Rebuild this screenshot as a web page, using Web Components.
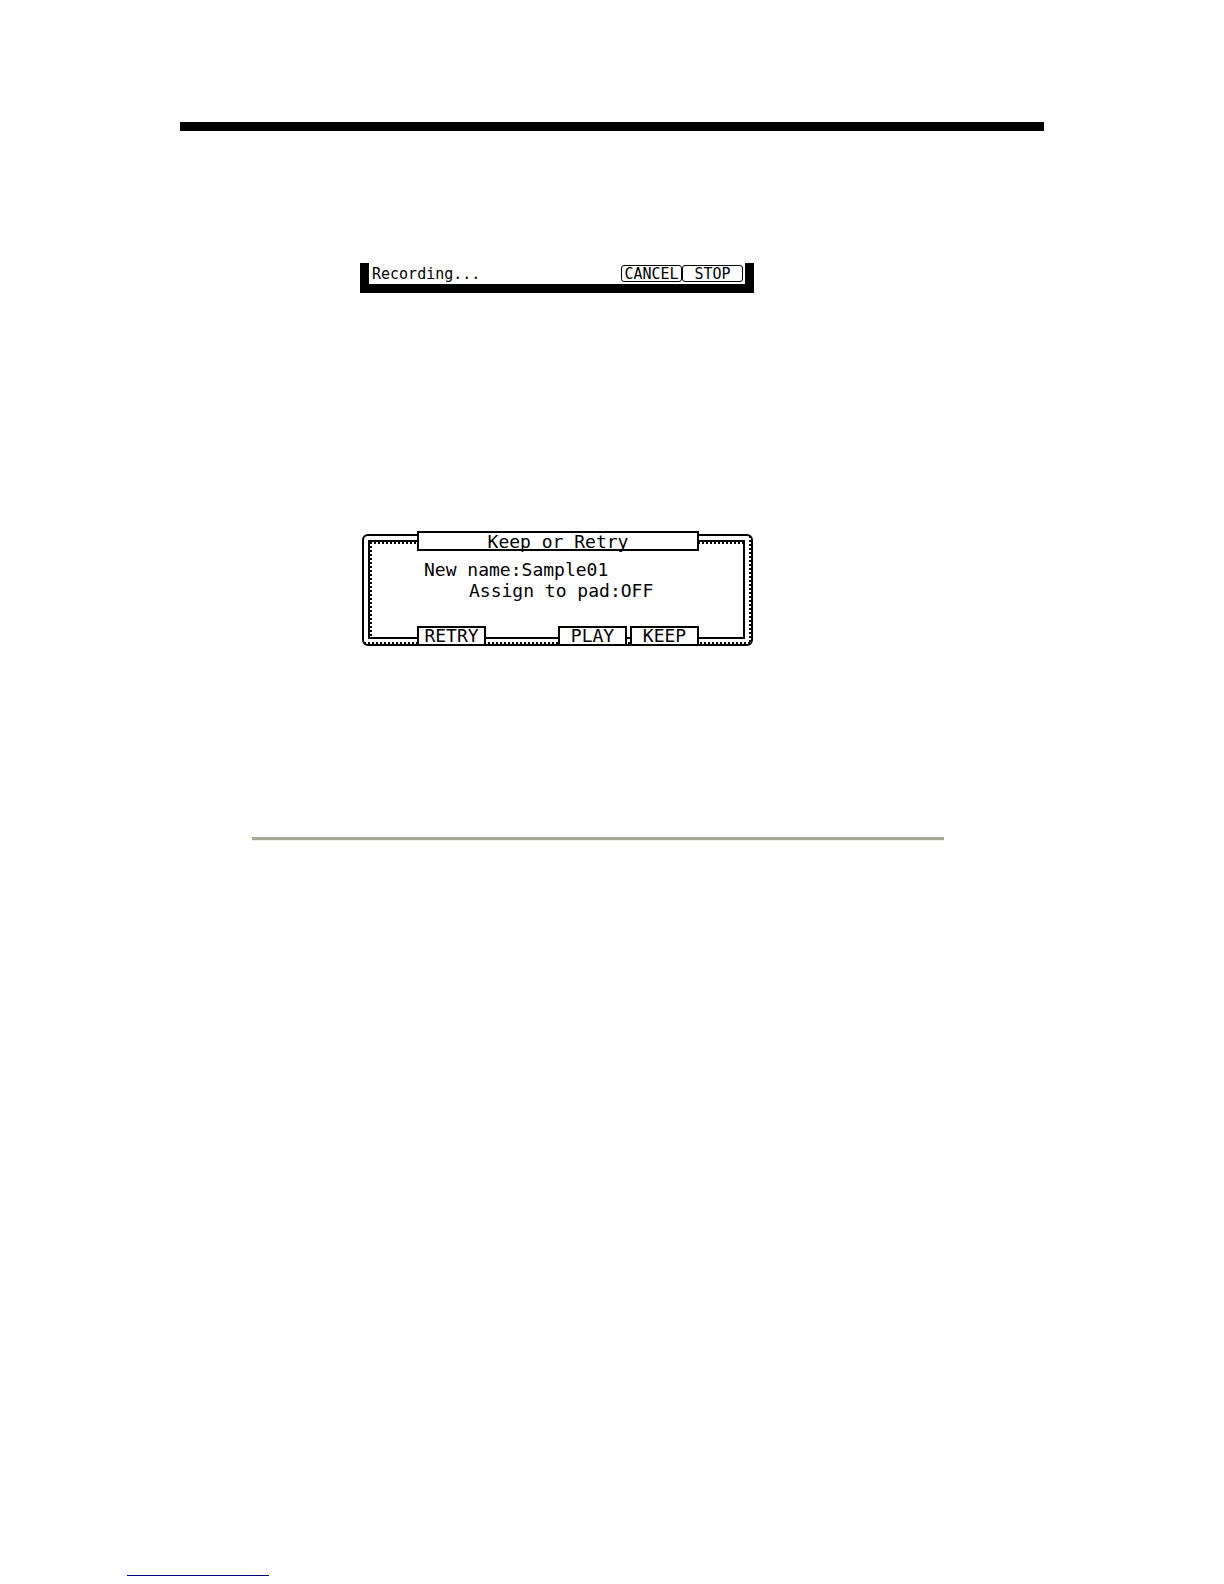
<!DOCTYPE html>
<html lang="en">
<head>
<meta charset="utf-8">
<title>Recording a sample</title>
<style>
    body {
        margin: 0;
        background: #fff;
        color: #000;
        font-family: "DejaVu Sans Mono", monospace;
    }
</style>
</head>
<body>
<manual-page>
    <status-strip>
        Recording...
        <soft-key slot="keys" variant="rounded">CANCEL</soft-key>
        <soft-key slot="keys" variant="rounded">STOP</soft-key>
    </status-strip>
    <lcd-dialog titulo="Keep or Retry">
        <lcd-field label="New name:" value="Sample01"></lcd-field>
        <lcd-field label="Assign to pad:" value="OFF" indent></lcd-field>
        <soft-key slot="keys">RETRY</soft-key>
        <soft-key slot="keys" class="push">PLAY</soft-key>
        <soft-key slot="keys">KEEP</soft-key>
    </lcd-dialog>
</manual-page>

<script>
class ManualPage extends HTMLElement {
    constructor() {
        super();
        this.attachShadow({ mode: "open" });
    }

    connectedCallback() {
        this.shadowRoot.innerHTML = `
            <style>
                :host {
                    display: flex;
                    flex-direction: column;
                    box-sizing: border-box;
                    min-height: 100vh;
                    padding: 122px 180px 8px;
                }

                hr {
                    margin: 0;
                    border: 0;
                }

                .top {
                    height: 9px;
                    background: #000;
                }

                .screens {
                    display: flex;
                    flex-direction: column;
                    gap: 238px;
                    width: 394px;
                    max-width: 100%;
                    margin: 132px 0 191px 180px;
                }

                .section {
                    height: 3px;
                    margin: 0 100px 0 72px;
                    background: #a8a899;
                    border-bottom: 1px solid #efefe4;
                }

                .footnote {
                    width: 142px;
                    height: 1px;
                    margin: auto 0 0 -53px;
                    background: #000080;
                }
            </style>

            <hr class="top">
            <div class="screens"><slot></slot></div>
            <hr class="section">
            <hr class="footnote">
        `;
    }
}

class StatusStrip extends HTMLElement {
    constructor() {
        super();
        this.attachShadow({ mode: "open" });
    }

    connectedCallback() {
        this.shadowRoot.innerHTML = `
            <style>
                :host {
                    display: flex;
                    justify-content: space-between;
                    border: 9px solid #000;
                    border-top: 0;
                    padding: 2px 2px 2px 3px;
                    font-size: 15px;
                    line-height: 19px;
                }

                span {
                    height: 17px;
                }

                .keys {
                    display: flex;
                }
            </style>

            <span><slot></slot></span>
            <div class="keys"><slot name="keys"></slot></div>
        `;
    }
}

class SoftKey extends HTMLElement {
    constructor() {
        super();
        this.attachShadow({ mode: "open" });
    }

    connectedCallback() {
        this.shadowRoot.innerHTML = `
            <style>
                :host {
                    display: block;
                }

                :host(.push) {
                    margin-left: auto;
                }

                button {
                    display: block;
                    box-sizing: border-box;
                    width: 69px;
                    height: 20px;
                    padding: 0;
                    border: 2px solid #000;
                    background: #fff;
                    color: inherit;
                    font: inherit;
                    font-size: 18px;
                    line-height: 16px;
                }

                :host([variant="rounded"]) button {
                    width: 61px;
                    height: 17px;
                    padding-top: 1px;
                    border-width: 1px;
                    border-radius: 3px;
                    font-size: 15px;
                    line-height: 15px;
                }
            </style>

            <button type="button"><slot></slot></button>
        `;
    }
}

class LcdField extends HTMLElement {
    constructor() {
        super();
        this.attachShadow({ mode: "open" });
    }

    connectedCallback() {
        const label = this.getAttribute("label") || "";
        const value = this.getAttribute("value") || "";

        this.shadowRoot.innerHTML = `
            <style>
                :host {
                    display: flex;
                    line-height: 21px;
                }

                :host([indent]) {
                    padding-left: 45px;
                }

                label {
                    white-space: nowrap;
                }

                input {
                    flex: 1;
                    width: 0;
                    min-width: 0;
                    height: 21px;
                    padding: 0;
                    border: 0;
                    outline: 0;
                    background: none;
                    color: inherit;
                    font: inherit;
                }
            </style>

            <label for="value">${label}</label>
            <input id="value" type="text" value="${value}">
        `;
    }
}

class LcdDialog extends HTMLElement {
    constructor() {
        super();
        this.attachShadow({ mode: "open" });
    }

    connectedCallback() {
        const titulo = this.getAttribute("titulo") || "";

        this.shadowRoot.innerHTML = `
            <style>
                :host {
                    display: grid;
                    grid-template-columns: minmax(0, 1fr);
                    margin: 0 1px 0 2px;
                    font-size: 18px;
                }

                /* frame and content share one grid cell */
                .frame, .content {
                    grid-area: 1 / 1;
                }

                .frame {
                    display: grid;
                    margin-top: 3px;
                    padding: 4px 6px 5px 4px;
                    border: 2px solid #000;
                    border-radius: 6px;
                    background:
                        repeating-linear-gradient(#000 0 2px, transparent 2px 4px) right / 2px 100% no-repeat,
                        repeating-linear-gradient(90deg, #000 0 2px, transparent 2px 4px) bottom / 100% 2px no-repeat;
                }

                .inner {
                    border: 2px solid #000;
                    background:
                        repeating-linear-gradient(#000 0 2px, transparent 2px 4px) left / 2px 100% no-repeat,
                        repeating-linear-gradient(90deg, #000 0 2px, transparent 2px 4px) top / 100% 2px no-repeat;
                }

                .content {
                    display: flex;
                    flex-direction: column;
                    padding: 0 54px 0 55px;
                }

                h1 {
                    height: 16px;
                    margin: 0;
                    border: 2px solid #000;
                    background: #fff;
                    font-size: 18px;
                    font-weight: normal;
                    line-height: 18px;
                    text-align: center;
                }

                .fields {
                    padding: 8px 0 25px 7px;
                }

                .keys {
                    display: flex;
                    gap: 3px;
                }
            </style>

            <div class="frame"><div class="inner"></div></div>
            <div class="content">
                <h1>${titulo}</h1>
                <div class="fields"><slot></slot></div>
                <div class="keys"><slot name="keys"></slot></div>
            </div>
        `;
    }
}

customElements.define("manual-page", ManualPage);
customElements.define("status-strip", StatusStrip);
customElements.define("soft-key", SoftKey);
customElements.define("lcd-field", LcdField);
customElements.define("lcd-dialog", LcdDialog);
</script>
</body>
</html>
